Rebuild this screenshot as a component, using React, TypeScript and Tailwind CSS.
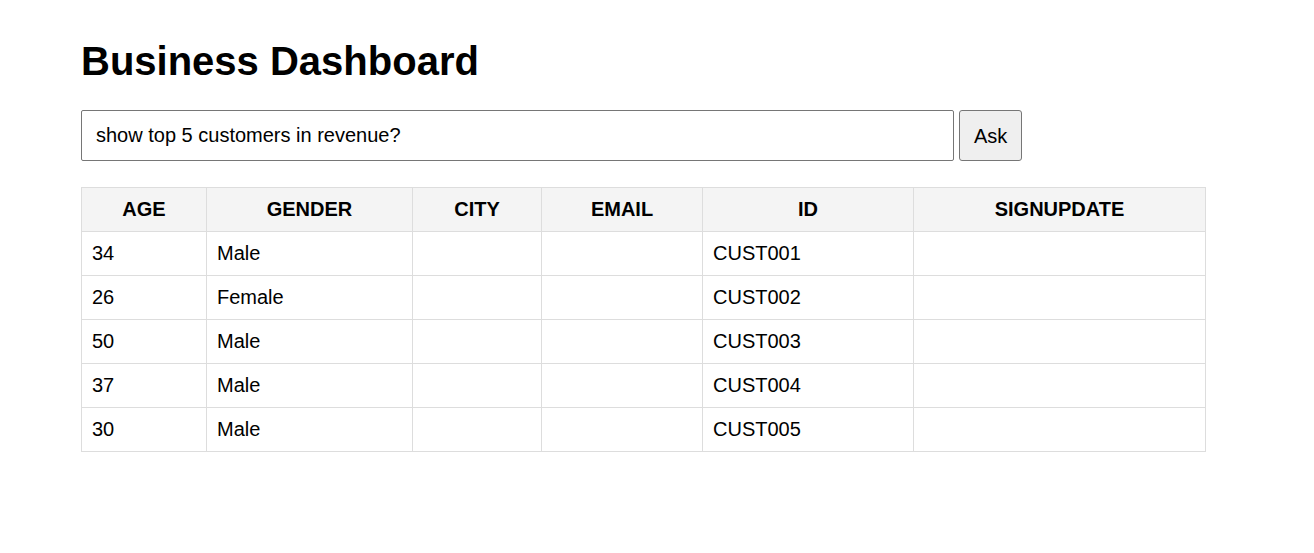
import { useState } from 'react';

const columns = [
  { key: 'age', label: 'AGE', width: 'w-[125px]' },
  { key: 'gender', label: 'GENDER', width: 'w-[206px]' },
  { key: 'city', label: 'CITY', width: 'w-[129px]' },
  { key: 'email', label: 'EMAIL', width: 'w-[161px]' },
  { key: 'id', label: 'ID', width: 'w-[211px]' },
  { key: 'signupdate', label: 'SIGNUPDATE', width: 'w-[292px]' },
];

type Row = Record<string, string>;

const rows: Row[] = [
  { age: '34', gender: 'Male', city: '', email: '', id: 'CUST001', signupdate: '' },
  { age: '26', gender: 'Female', city: '', email: '', id: 'CUST002', signupdate: '' },
  { age: '50', gender: 'Male', city: '', email: '', id: 'CUST003', signupdate: '' },
  { age: '37', gender: 'Male', city: '', email: '', id: 'CUST004', signupdate: '' },
  { age: '30', gender: 'Male', city: '', email: '', id: 'CUST005', signupdate: '' },
];

export default function App() {
  const [question, setQuestion] = useState('show top 5 customers in revenue?');

  return (
    <div className="min-h-screen bg-white text-black font-['Liberation_Sans',Arial,sans-serif]">
      <div className="max-w-[1200px] mx-auto px-6 pt-[38px]">
        <h1 className="text-[40px] font-bold leading-[46px] m-0">Business Dashboard</h1>

        <div className="flex items-stretch gap-[5px] mt-[26px]">
          <input
            value={question}
            onChange={(e) => setQuestion(e.target.value)}
            className="w-[873px] h-[51px] px-[14px] text-[20px] border border-[#767676] rounded-[2px] outline-none"
          />
          <button className="h-[51px] px-[14px] text-[20px] bg-[#efefef] border border-[#767676] rounded-[3px]">
            Ask
          </button>
        </div>

        <table className="mt-[26px] w-[1124px] border-collapse table-fixed text-[20px]">
          <thead>
            <tr>
              {columns.map((c) => (
                <th
                  key={c.key}
                  className={`${c.width} bg-[#f4f4f4] border border-[#dddddd] px-[10px] py-[10px] leading-[23px] font-bold text-center`}
                >
                  {c.label}
                </th>
              ))}
            </tr>
          </thead>
          <tbody>
            {rows.map((r) => (
              <tr key={r.id}>
                {columns.map((c) => (
                  <td
                    key={c.key}
                    className="border border-[#dddddd] px-[10px] py-[10px] leading-[23px] text-left"
                  >
                    {r[c.key]}
                  </td>
                ))}
              </tr>
            ))}
          </tbody>
        </table>
      </div>
    </div>
  );
}
